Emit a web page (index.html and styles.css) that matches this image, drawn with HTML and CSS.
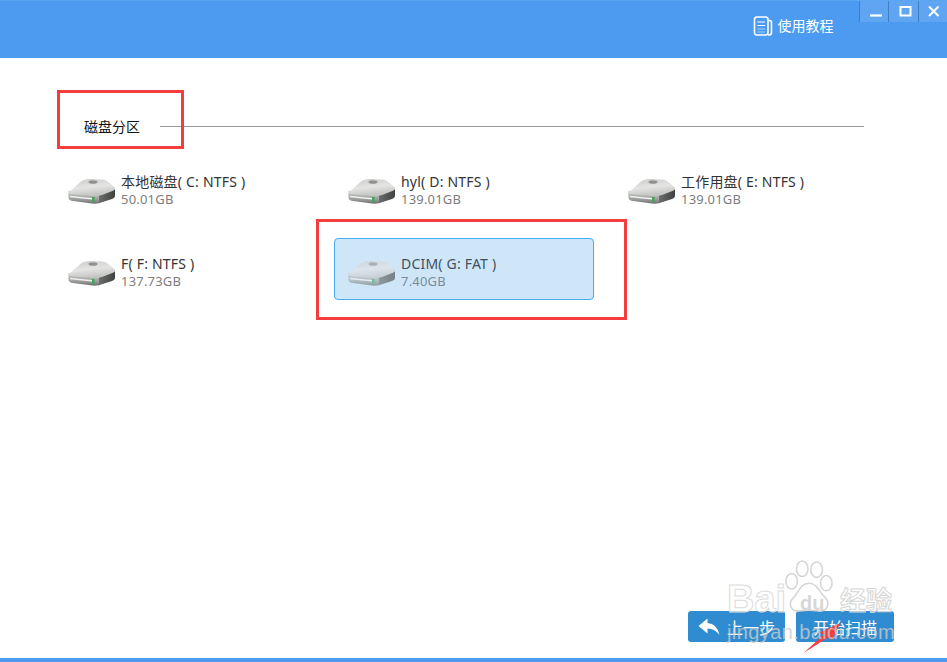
FILE: index.html
```html
<!DOCTYPE html>
<html lang="zh">
<head>
<meta charset="utf-8">
<title>磁盘分区</title>
<link rel="stylesheet" href="styles.css">
</head>
<body>
<svg class="defs" width="0" height="0" aria-hidden="true">
  <defs>
    <linearGradient id="hdTop" x1="0" y1="0" x2="0.300" y2="1">
      <stop offset="0" stop-color="#c9cbc8"/>
      <stop offset="0.550" stop-color="#e4e5e3"/>
      <stop offset="1" stop-color="#c4c6c3"/>
    </linearGradient>
    <linearGradient id="hdFront" x1="0" y1="0" x2="0" y2="1">
      <stop offset="0" stop-color="#c4c6c3"/>
      <stop offset="0.600" stop-color="#a2a5a2"/>
      <stop offset="1" stop-color="#6d706e"/>
    </linearGradient>
    <linearGradient id="hdSide" x1="0" y1="0" x2="1" y2="0">
      <stop offset="0" stop-color="#6d706e"/>
      <stop offset="1" stop-color="#3f4240"/>
    </linearGradient>
    <symbol id="hd" viewBox="0 0 48 26">
      <path d="M30 17 L47 10 V18 Q47 20 44 21 L30 25.500 Z" fill="url(#hdSide)"/>
      <path d="M0.500 13 V20 Q1 22.500 5 23 L24 25.500 Q28 26 31 25 V16 L6 13 Z" fill="url(#hdFront)"/>
      <path d="M1 14 L13 3.500 Q16 1 22 1 L34 1.500 Q37 1.500 39 3 L47 9.500 Q48 11.500 45 12.800 L34 17 Q30 18.500 25 18 L5 16.500 Q0.500 16 1 14 Z" fill="url(#hdTop)"/>
      <ellipse cx="25" cy="4" rx="4.500" ry="1.800" fill="#8f928f"/>
      <path d="M2 18.500 L26 21" fill="none" stroke="#eeefed" stroke-width="1.500"/>
      <rect x="24" y="19" width="2.500" height="5" fill="#39a85a"/>
    </symbol>
  </defs>
</svg>

<div class="window">
  <header class="titlebar">
    <div class="help">
      <svg class="help-icon" viewBox="0 0 20 20" width="20" height="20" aria-hidden="true">
        <rect x="1.500" y="1" width="13.500" height="18" rx="2.500" fill="none" stroke="#fff" stroke-width="1.600"/>
        <path d="M15 4.500 h1.500 q2 0 2 2 v10 q0 2.500 -2.500 2.500 h-1" fill="none" stroke="#fff" stroke-width="1.600"/>
        <path d="M4.500 6h7.500M4.500 9.500h7.500" stroke="#fff" stroke-width="1.200"/>
        <path d="M4.500 13h7.500M4.500 16h7.500" stroke="#a9cff7" stroke-width="1.200"/>
      </svg>
      <span>使用教程</span>
    </div>
    <div class="win-controls">
      <button class="win-btn" type="button" aria-label="最小化"><svg viewBox="0 0 30 21" width="30" height="21"><path d="M11 14.500h12" stroke="#fff" stroke-width="2.200"/></svg></button>
      <button class="win-btn" type="button" aria-label="最大化"><svg viewBox="0 0 30 21" width="30" height="21"><rect x="12.500" y="6" width="10" height="8.500" fill="none" stroke="#fff" stroke-width="2"/></svg></button>
      <button class="win-btn" type="button" aria-label="关闭"><svg viewBox="0 0 30 21" width="30" height="21"><path d="M11 5.500l9.500 9.500M20.500 5.500l-9.500 9.500" stroke="#fff" stroke-width="2"/></svg></button>
    </div>
  </header>

  <main class="content">
    <div class="section-head">
      <h2 class="section-title">磁盘分区</h2>
      <div class="section-rule"></div>
    </div>
    <div class="drives">
      <div class="drive">
        <svg class="drive-icon"><use href="#hd"/></svg>
        <div class="drive-info"><div class="drive-name">本地磁盘( C: NTFS )</div><div class="drive-size">50.01GB</div></div>
      </div>
      <div class="drive">
        <svg class="drive-icon"><use href="#hd"/></svg>
        <div class="drive-info"><div class="drive-name">hyl( D: NTFS )</div><div class="drive-size">139.01GB</div></div>
      </div>
      <div class="drive">
        <svg class="drive-icon"><use href="#hd"/></svg>
        <div class="drive-info"><div class="drive-name">工作用盘( E: NTFS )</div><div class="drive-size">139.01GB</div></div>
      </div>
      <div class="drive">
        <svg class="drive-icon"><use href="#hd"/></svg>
        <div class="drive-info"><div class="drive-name">F( F: NTFS )</div><div class="drive-size">137.73GB</div></div>
      </div>
      <div class="drive selected">
        <svg class="drive-icon"><use href="#hd"/></svg>
        <div class="drive-info"><div class="drive-name">DCIM( G: FAT )</div><div class="drive-size">7.40GB</div></div>
      </div>
    </div>
    <div class="actions">
      <button class="action back" type="button">
        <svg class="back-icon" viewBox="0 0 22 18" width="22" height="18" aria-hidden="true"><path d="M0.500 8 L9.500 0.500 V5 Q19 5.500 21.500 17 Q17 10.500 9.500 10.500 V15.500 Z" fill="#fff"/></svg>
        <span>上一步</span>
      </button>
      <button class="action" type="button"><span>开始扫描</span></button>
    </div>
  </main>
  <div class="bottom-bar"></div>
</div>

<div class="mark mark-title"></div>
<div class="mark mark-drive"></div>
<svg class="mark-arrow" viewBox="0 0 40 34" width="40" height="33" aria-hidden="true"><path d="M1 33 L22 14 L17 12 L39 2 L30 20 L26 17 Z" fill="#f53d3d"/></svg>
<div class="watermark">
  <svg class="paw" viewBox="0 0 52 56" width="50" height="54" aria-hidden="true">
    <g fill="none" stroke="#d4d4d4" stroke-width="1.600">
      <ellipse cx="9" cy="22" rx="6" ry="8"/>
      <ellipse cx="20" cy="9" rx="6" ry="8"/>
      <ellipse cx="35" cy="10" rx="6" ry="8"/>
      <ellipse cx="45" cy="24" rx="6" ry="8"/>
      <path d="M27 24 C36 24 38 34 44 39 C50 46 45 54 37 53 C31 52 23 52 17 53 C9 54 4 46 11 39 C16 34 18 24 27 24 Z"/>
    </g>
  </svg>
  <span class="wm-bai">Bai</span><span class="wm-du">du</span><span class="wm-jy">经验</span>
  <div class="wm-url">jingyan.baidu.com</div>
</div>
</body>
</html>
```
FILE: styles.css
```css
* { box-sizing: border-box; }
html, body { margin: 0; padding: 0; }
body {
  width: 947px;
  height: 662px;
  overflow: hidden;
  position: relative;
  background: #fff;
  font-family: "Noto Sans", "Noto Sans CJK SC", sans-serif;
}
.defs { position: absolute; }
.window { height: 662px; display: flex; flex-direction: column; }

.titlebar {
  height: 58px;
  flex: none;
  background: #4c9bf0;
  border-top: 1px solid #5aa6f0;
  display: flex;
  justify-content: flex-end;
  align-items: flex-start;
  color: #fff;
}
.help {
  display: flex;
  align-items: center;
  gap: 5px;
  margin-top: 15px;
  margin-right: 25px;
  font-size: 14px;
  line-height: 20px;
}
.help-icon { display: block; }
.win-controls { display: flex; }
.win-btn {
  width: 29.500px;
  height: 21px;
  padding: 0;
  border: 0;
  border-left: 1px solid #3f7fc4;
  background: #5fa5f2;
  display: block;
  overflow: hidden;
}
.win-btn svg { display: block; margin-left: -1px; }

.content { flex: 1; padding: 0 54px; display: flex; flex-direction: column; }

.section-head {
  display: flex;
  align-items: center;
  margin-top: 58px;
  padding-left: 30px;
  height: 20px;
  gap: 20px;
}
.section-title {
  margin: 0;
  padding-top: 2px;
  font-size: 14px;
  font-weight: normal;
  color: #111;
  line-height: 20px;
}
.section-rule { width: 704px; height: 1px; background: #999; }

.drives {
  display: grid;
  grid-template-columns: repeat(3, 260px);
  grid-auto-rows: 62px;
  column-gap: 20px;
  row-gap: 20px;
  margin-top: 20px;
}
.drive {
  display: flex;
  align-items: flex-start;
  border: 1px solid transparent;
  border-radius: 4px;
  padding: 15px 0 0 13px;
}
.drive.selected { background: #cfe6f9; border-color: #45aeef; }
.drive-icon { width: 48px; height: 26px; flex: none; margin-top: 6px; }
.drive-info { margin-left: 5px; }
.drive-name { font-size: 14px; line-height: 20px; letter-spacing: .2px; color: #333; white-space: nowrap; }
.drive-size { font-size: 13px; line-height: 15px; letter-spacing: .2px; color: #7d7d7d; }
.drive.selected .drive-icon { opacity: .62; }
.drive.selected .drive-name { color: #3f5160; }
.drive.selected .drive-size { color: #7a8c9c; }

.actions {
  margin-top: auto;
  margin-bottom: 16px;
  display: flex;
  justify-content: flex-end;
  gap: 11px;
  margin-right: -1px;
}
.action {
  width: 98px;
  height: 31px;
  border: 0;
  border-radius: 3px;
  background: #2f8cd0;
  color: #fff;
  font-family: inherit;
  font-size: 16px;
  padding: 0;
  display: flex;
  align-items: center;
  justify-content: center;
  gap: 7px;
}
.action.back { width: 97px; }
.bottom-bar { height: 4px; flex: none; background: #4c9bf0; }

.mark { position: absolute; border: 3px solid #f53d3d; }
.mark-title { left: 57px; top: 90px; width: 127px; height: 59px; }
.mark-drive { left: 316px; top: 219px; width: 311px; height: 101px; }
.mark-arrow { position: absolute; left: 802px; top: 621px; }

.watermark {
  position: absolute;
  left: 727px;
  top: 560px;
  width: 200px;
  height: 100px;
  pointer-events: none;
}
.paw { position: absolute; left: 56px; top: 0; }
.wm-bai { position: absolute; left: 0; top: 17px; font-family: "Liberation Sans", sans-serif; font-size: 38px; line-height: 44px; font-weight: bold; color: rgba(255,255,255,.6); -webkit-text-stroke: 1px #dcdcdc; }
.wm-du { position: absolute; left: 73px; top: 31px; font-family: "Liberation Sans", sans-serif; font-size: 20px; line-height: 24px; font-weight: bold; color: rgba(205,205,205,.8); }
.wm-jy { position: absolute; left: 113px; top: 24px; font-size: 26px; line-height: 32px; font-weight: bold; color: rgba(255,255,255,.5); -webkit-text-stroke: 1px #d6d6d6; }
.wm-url { position: absolute; left: 0; top: 60px; font-family: "Liberation Sans", sans-serif; font-size: 20px; line-height: 24px; letter-spacing: .4px; color: rgba(205,205,205,.8); }
```
